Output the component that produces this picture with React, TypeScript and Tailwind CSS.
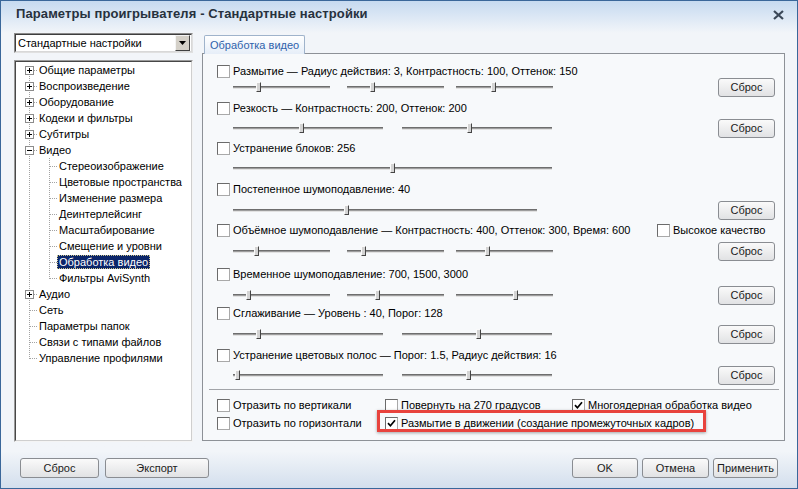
import React from "react";

type Sl = { w: string; ml: string; start: number; thumb: number };

const three = (a: number, b: number, c: number): Sl[] => [
  { w: "w-[97px]", ml: "ml-0", start: 233, thumb: a },
  { w: "w-[97px]", ml: "ml-[17px]", start: 347, thumb: b },
  { w: "w-[97px]", ml: "ml-[12px]", start: 456, thumb: c },
];
const two = (a: number, b: number): Sl[] => [
  { w: "w-[150px]", ml: "ml-0", start: 233, thumb: a },
  { w: "w-[150px]", ml: "ml-[19px]", start: 402, thumb: b },
];
const one = (a: number, w: string): Sl[] => [{ w, ml: "ml-0", start: 233, thumb: a }];

const rows = [
  { label: "Размытие — Радиус действия: 3, Контрастность: 100, Оттенок: 150", m1: "mt-[11px]", m2: "-mt-px", btn: true, s: three(258, 372, 493), hq: false },
  { label: "Резкость — Контрастность: 200, Оттенок: 200", m1: "mt-[5px]", m2: "mt-[3px]", btn: true, s: two(301, 469), hq: false },
  { label: "Устранение блоков: 256", m1: "mt-[4px]", m2: "mt-[3px]", btn: false, s: one(392, "w-[319px]"), hq: false },
  { label: "Постепенное шумоподавление: 40", m1: "mt-[5px]", m2: "mt-[4px]", btn: true, s: one(346, "w-[304px]"), hq: false },
  { label: "Объёмное шумоподавление — Контрастность: 400, Оттенок: 300, Время: 600", m1: "mt-[4px]", m2: "mt-[4px]", btn: true, s: three(256, 363, 487), hq: true },
  { label: "Временное шумоподавление: 700, 1500, 3000", m1: "mt-[7px]", m2: "mt-[4px]", btn: true, s: three(248, 377, 515), hq: false },
  { label: "Сглаживание — Уровень : 40, Порог: 128", m1: "mt-[2px]", m2: "mt-[4px]", btn: true, s: two(258, 478), hq: false },
  { label: "Устранение цветовых полос — Порог: 1.5, Радиус действия: 16", m1: "mt-[5px]", m2: "mt-[3px]", btn: true, s: two(237, 468), hq: false },
];

function Checkbox({ checked = false }: { checked?: boolean }) {
  return (
    <span className="flex h-[13px] w-[13px] shrink-0 items-center justify-center border border-t-[#6b6b6b] border-l-[#6b6b6b] border-r-[#a9a9a9] border-b-[#a9a9a9] bg-white">
      {checked && (
        <svg width="9" height="9" viewBox="0 0 9 9">
          <path d="M1 4.2 L3.4 6.8 L8 1.2" fill="none" stroke="#000" strokeWidth="1.7" />
        </svg>
      )}
    </span>
  );
}

function Slider({ s }: { s: Sl }) {
  return (
    <div className={`relative flex h-[12px] shrink-0 items-center ${s.w} ${s.ml}`}>
      <div className="h-[3px] w-full border-t border-b border-t-[#6e6e6e] border-b-[#e2e2e2] bg-[#9d9d9d]" />
      <div
        className="absolute top-[1px] h-[10px] w-[5px] border border-t-[#fafafa] border-l-[#fafafa] border-r-[#454545] border-b-[#454545] bg-[#d4d4d4]"
        style={{ left: s.thumb - s.start - 2 }}
      />
    </div>
  );
}

function Btn({ children, cls }: { children: React.ReactNode; cls: string }) {
  return (
    <div
      className={`flex items-center justify-center rounded-[3px] border border-[#8a8d92] bg-linear-to-b from-[#fafafa] to-[#e1e2e4] text-[11px] text-[#1b1b1b] ${cls}`}
    >
      {children}
    </div>
  );
}

type TreeItem = { t: string; k: "plus" | "minus" | "none"; children?: string[] };
const tree: TreeItem[] = [
  { t: "Общие параметры", k: "plus" },
  { t: "Воспроизведение", k: "plus" },
  { t: "Оборудование", k: "plus" },
  { t: "Кодеки и фильтры", k: "plus" },
  { t: "Субтитры", k: "plus" },
  {
    t: "Видео",
    k: "minus",
    children: [
      "Стереоизображение",
      "Цветовые пространства",
      "Изменение размера",
      "Деинтерлейсинг",
      "Масштабирование",
      "Смещение и уровни",
      "Обработка видео",
      "Фильтры AviSynth",
    ],
  },
  { t: "Аудио", k: "plus" },
  { t: "Сеть", k: "none" },
  { t: "Параметры папок", k: "none" },
  { t: "Связи с типами файлов", k: "none" },
  { t: "Управление профилями", k: "none" },
];

const DOT = "#a3a3a3";

function TopGutter({ k, first, last }: { k: string; first: boolean; last: boolean }) {
  return (
    <svg width="21" height="16" className="shrink-0" shapeRendering="crispEdges">
      <line x1="13.5" y1={first ? 8 : 0} x2="13.5" y2={last ? 9 : 16} stroke={DOT} strokeDasharray="1 1" />
      <line x1="14" y1="8.5" x2="21" y2="8.5" stroke={DOT} strokeDasharray="1 1" />
      {k !== "none" && (
        <>
          <rect x="9.5" y="4.5" width="8" height="8" fill="#fff" stroke="#8c8c8c" />
          <line x1="11" y1="8.5" x2="16" y2="8.5" stroke="#000" />
          {k === "plus" && <line x1="13.5" y1="6" x2="13.5" y2="11" stroke="#000" />}
        </>
      )}
    </svg>
  );
}

function ChildGutter({ last }: { last: boolean }) {
  return (
    <svg width="41" height="16" className="shrink-0" shapeRendering="crispEdges">
      <line x1="13.5" y1="0" x2="13.5" y2="16" stroke={DOT} strokeDasharray="1 1" />
      <line x1="33.5" y1="0" x2="33.5" y2={last ? 9 : 16} stroke={DOT} strokeDasharray="1 1" />
      <line x1="34" y1="8.5" x2="41" y2="8.5" stroke={DOT} strokeDasharray="1 1" />
    </svg>
  );
}

function Tree() {
  return (
    <div className="flex flex-col">
      {tree.map((it, i) => (
        <React.Fragment key={it.t}>
          <div className="flex h-[16px] items-center">
            <TopGutter k={it.k} first={i === 0} last={i === tree.length - 1} />
            <span className="px-[2px] leading-[14px]">{it.t}</span>
          </div>
          {it.children?.map((c, j) => (
            <div key={c} className="flex h-[16px] items-center">
              <ChildGutter last={j === it.children!.length - 1} />
              {c === "Обработка видео" ? (
                <span className="bg-[#0b2569] px-[2px] leading-[14px] text-white outline-1 -outline-offset-1 outline-dotted outline-[#cfc68a]">
                  {c}
                </span>
              ) : (
                <span className="px-[2px] leading-[14px]">{c}</span>
              )}
            </div>
          ))}
        </React.Fragment>
      ))}
    </div>
  );
}

export default function App() {
  return (
    <div className="flex h-[489px] w-[798px] flex-col overflow-hidden border border-[#3a679a] bg-[#f2f5f9] font-['Liberation_Sans',Arial,sans-serif] text-[11px] text-black">
      {/* Title bar */}
      <div className="flex h-[32px] shrink-0 items-start bg-linear-to-b from-[#c6daf0] to-[#f2f5f9] pl-[15px] pr-[13px]">
        <div className="pt-[4px] text-[13px] leading-[17px] font-bold tracking-[0.1px] text-[#27313d]">
          Параметры проигрывателя - Стандартные настройки
        </div>
        <svg className="ml-auto mt-[9px]" width="11" height="10" viewBox="0 0 11 10">
          <path d="M1 1 L10 9 M10 1 L1 9" stroke="#3b4858" strokeWidth="2.2" />
        </svg>
      </div>

      {/* Body */}
      <div className="flex h-[409px] shrink-0 pl-[13px]">
        {/* Left column */}
        <div className="flex w-[179px] flex-col">
          <div className="flex h-[20px] border border-t-[#8a8a8a] border-l-[#8a8a8a] border-r-[#e0e0e0] border-b-[#e0e0e0]">
            <div className="flex flex-1 items-center border border-t-[#3e3e3e] border-l-[#3e3e3e] border-r-[#d8d8d8] border-b-[#d8d8d8] bg-white pl-[2px] pr-px">
              <span className="flex-1">Стандартные настройки</span>
              <div className="flex h-[16px] w-[15px] items-center justify-center border border-t-[#f4f4f4] border-l-[#f4f4f4] border-r-[#404040] border-b-[#404040] bg-[#d4d0c8]">
                <svg width="7" height="4" viewBox="0 0 7 4">
                  <path d="M0 0 H7 L3.5 4 Z" fill="#000" />
                </svg>
              </div>
            </div>
          </div>
          <div className="mt-[7px] h-[382px] border border-t-[#9a9a9a] border-l-[#9a9a9a] border-r-[#f4f4f4] border-b-[#f4f4f4]">
            <div className="h-full border border-t-[#474747] border-l-[#474747] border-r-[#cfcfcf] border-b-[#cfcfcf] bg-white">
              <Tree />
            </div>
          </div>
        </div>

        {/* Right column */}
        <div className="ml-[9px] flex w-[583px] flex-col">
          <div className="flex h-[21px] shrink-0 items-start">
            <div className="relative z-10 ml-[2px] mt-[2px] flex h-[19px] w-[101px] items-center rounded-t-[2px] border border-b-0 border-[#9fb3cb] bg-linear-to-b from-[#ffffff] to-[#e6eef8] pl-[5px] text-[#2f62ab]">
              Обработка видео
            </div>
          </div>
          <div className="-mt-px flex h-[388px] flex-col border border-[#8d9197] bg-[#f7f9fb]">
            {rows.map((r) => (
              <div key={r.label} className="flex flex-col pl-[14px] pr-[9px]">
                <div className={`flex h-[13px] items-center ${r.m1}`}>
                  <div className="flex w-[440px] items-center gap-[3px]">
                    <Checkbox />
                    <span className="whitespace-nowrap">{r.label}</span>
                  </div>
                  {r.hq && (
                    <div className="flex items-center gap-[3px]">
                      <Checkbox />
                      <span>Высокое качество</span>
                    </div>
                  )}
                </div>
                <div className={`flex h-[20px] items-center pl-[16px] ${r.m2}`}>
                  {r.s.map((s, i) => (
                    <Slider key={i} s={s} />
                  ))}
                  {r.btn && <Btn cls="ml-auto h-[19px] w-[57px]">Сброс</Btn>}
                </div>
              </div>
            ))}
            <div className="ml-[6px] mr-[5px] mt-[4px] h-px bg-[#a2a4a8]" />
            <div className="mt-[9px] flex h-[13px] items-center pl-[14px]">
              <div className="flex w-[168px] items-center gap-[3px]">
                <Checkbox />
                <span>Отразить по вертикали</span>
              </div>
              <div className="flex w-[187px] items-center gap-[3px]">
                <Checkbox />
                <span>Повернуть на 270 градусов</span>
              </div>
              <div className="flex items-center gap-[3px]">
                <Checkbox checked />
                <span>Многоядерная обработка видео</span>
              </div>
            </div>
            <div className="mt-[5px] flex h-[13px] items-center pl-[14px]">
              <div className="flex w-[168px] items-center gap-[3px]">
                <Checkbox />
                <span>Отразить по горизонтали</span>
              </div>
              <div className="relative flex items-center gap-[3px]">
                <Checkbox checked />
                <span>Размытие в движении (создание промежуточных кадров)</span>
                <div className="absolute left-[-8px] top-[-5px] h-[22px] w-[329px] border-[3px] border-[#e8433d] shadow-[0_1px_3px_rgba(0,0,0,0.35)]" />
              </div>
            </div>
          </div>
        </div>
      </div>

      {/* Bottom bar */}
      <div className="flex flex-1 items-start bg-linear-to-b from-[#f2f5f9] from-20% to-[#d3dfed] pl-[19px] pr-[19px] pt-[16px]">
        <Btn cls="h-[20px] w-[79px]">Сброс</Btn>
        <Btn cls="ml-[6px] h-[20px] w-[104px]">Экспорт</Btn>
        <Btn cls="ml-auto h-[20px] w-[66px]">OK</Btn>
        <Btn cls="ml-[4px] h-[20px] w-[67px]">Отмена</Btn>
        <Btn cls="ml-[4px] h-[20px] w-[65px]">Применить</Btn>
      </div>
    </div>
  );
}
